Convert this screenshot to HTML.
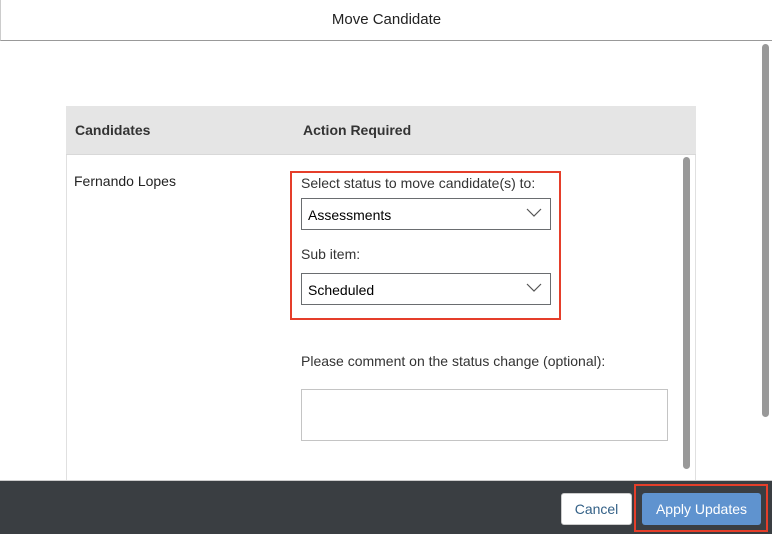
<!DOCTYPE html><html><head><style>
*{box-sizing:border-box;margin:0;padding:0}
body{width:772px;height:534px;position:relative;background:#fff;font-family:"Liberation Sans",sans-serif;overflow:hidden;color:#32363a}
.a{position:absolute}
.sel{position:absolute;left:301px;width:250px;height:32px;border:1px solid #6a6d70;font-size:14px;color:#000;padding:8px 0 0 6px}
.sel svg{position:absolute;right:8px;top:9px}
</style></head><body>
<div class="a" style="left:0;top:0;width:772px;height:41px;border-left:1px solid #ccc;border-bottom:1px solid #999;text-align:center;font-size:15px;line-height:40px;color:#222">Move Candidate</div>
<div class="a" style="left:762px;top:44px;width:7px;height:373px;background:#999;border-radius:4px"></div>
<div class="a" style="left:66px;top:106px;width:630px;height:380px;border:1px solid #e0e0e0"></div>
<div class="a" style="left:66px;top:106px;width:630px;height:49px;background:#e5e5e5;border-bottom:1px solid #d8d8d8"></div>
<div class="a" style="left:75px;top:122px;font-size:14px;font-weight:bold;color:#333">Candidates</div>
<div class="a" style="left:303px;top:122px;font-size:14px;font-weight:bold;color:#333">Action Required</div>
<div class="a" style="left:74px;top:173px;font-size:14px;color:#222">Fernando Lopes</div>
<div class="a" style="left:683px;top:157px;width:7px;height:312px;background:#999;border-radius:4px"></div>
<div class="a" style="left:290px;top:171px;width:271px;height:149px;border:2px solid #e53e2a"></div>
<div class="a" style="left:301px;top:175px;font-size:14px;color:#333">Select status to move candidate(s) to:</div>
<div class="sel" style="top:198px">Assessments<svg width="16" height="10" viewBox="0 0 16 10"><path d="M1 1L8 8L15 1" fill="none" stroke="#555" stroke-width="1.2"/></svg></div>
<div class="a" style="left:301px;top:246px;font-size:14px;color:#333">Sub item:</div>
<div class="sel" style="top:273px">Scheduled<svg width="16" height="10" viewBox="0 0 16 10"><path d="M1 1L8 8L15 1" fill="none" stroke="#555" stroke-width="1.2"/></svg></div>
<div class="a" style="left:301px;top:353px;font-size:14px;color:#333">Please comment on the status change (optional):</div>
<div class="a" style="left:301px;top:389px;width:367px;height:52px;border:1px solid #c4c4c4"></div>
<div class="a" style="left:0;top:480px;width:772px;height:54px;background:#3a3e42;border-top:1px solid #ccc"></div>
<div class="a" style="left:561px;top:493px;width:71px;height:32px;background:#fff;border:1px solid #ccc;border-radius:3px;text-align:center;line-height:30px;font-size:14px;color:#346187">Cancel</div>
<div class="a" style="left:634px;top:484px;width:134px;height:48px;border:2px solid #e53e2a"></div>
<div class="a" style="left:642px;top:493px;width:119px;height:32px;background:#5f93cf;border-radius:3px;text-align:center;line-height:32px;font-size:14px;color:#fff">Apply Updates</div>
</body></html>
